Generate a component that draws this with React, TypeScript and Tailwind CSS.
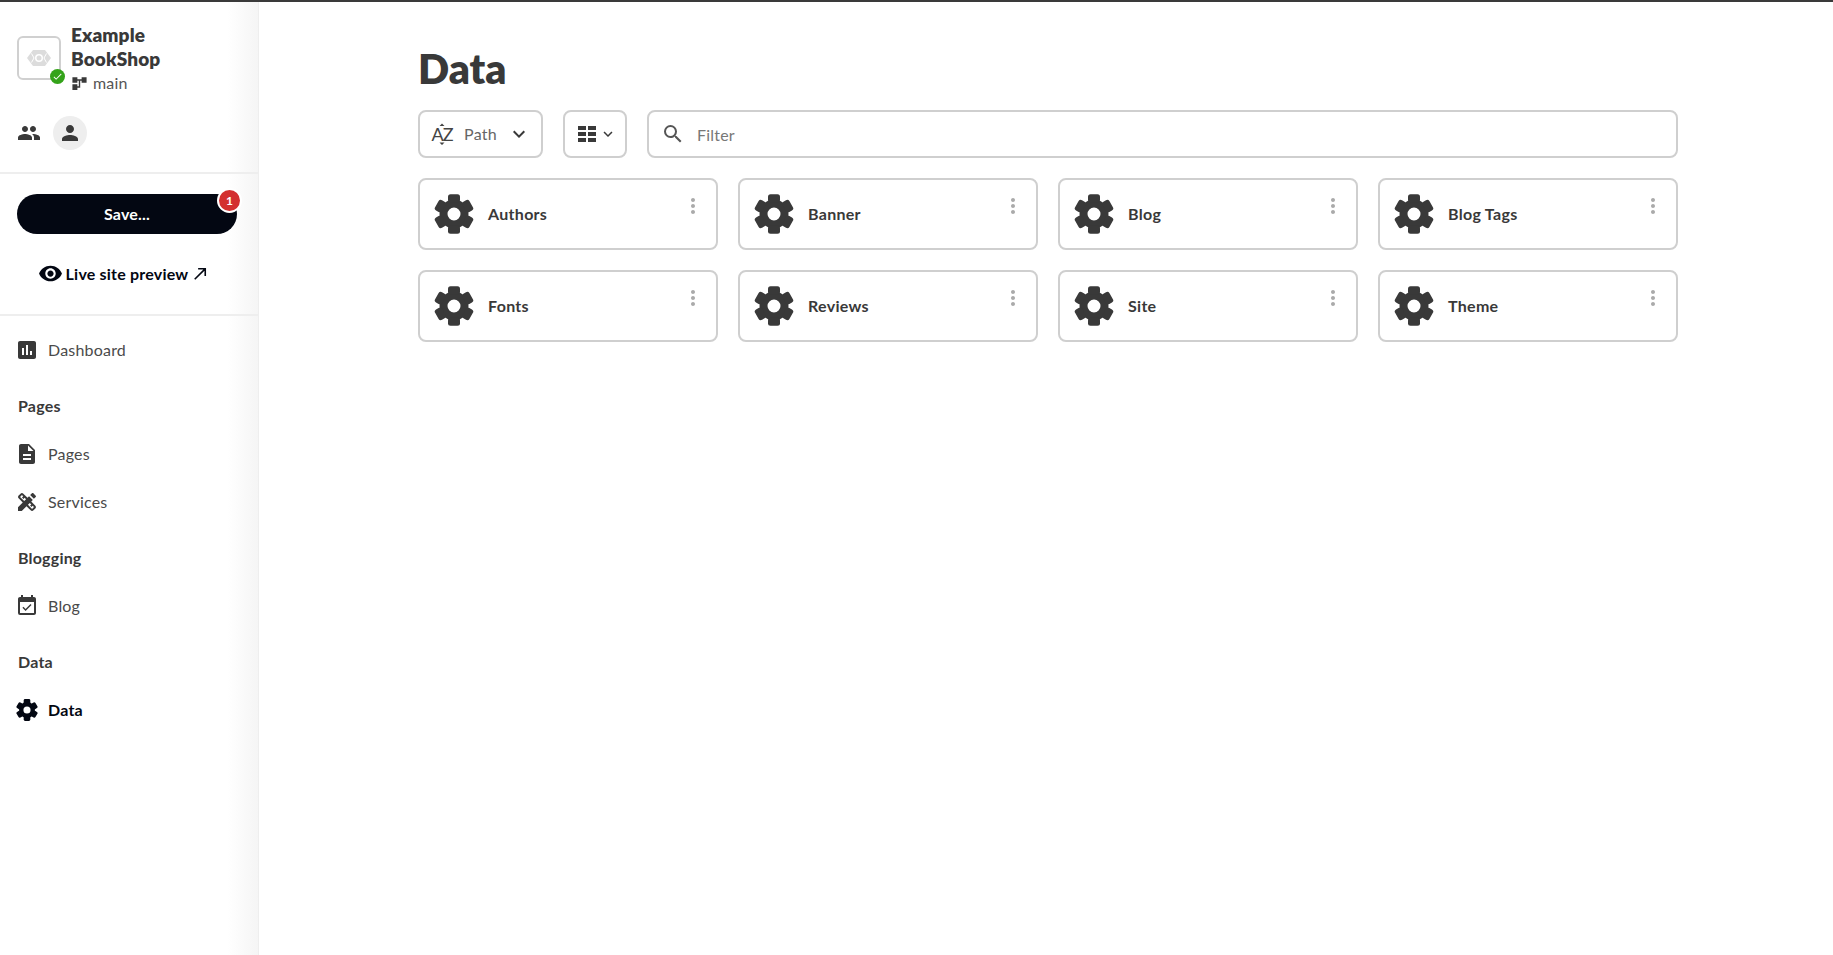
import React from "react";
import { MdPeople, MdPerson, MdAssessment, MdDescription, MdDesignServices, MdEventAvailable, MdVisibility, MdNorthEast, MdExpandMore, MdSearch, MdMoreVert, MdAccountTree, MdCheck } from "react-icons/md";

const names = ["Authors", "Banner", "Blog", "Blog Tags", "Fonts", "Reviews", "Site", "Theme"];

function Gear({ size, className }: { size: number; className?: string }) {
  return (
    <svg width={size} height={size} viewBox="0 0 40 40" className={className} fill="currentColor">
      <path
        fillRule="evenodd"
        d="M20 5.5a14.5 14.5 0 1 0 0 29a14.5 14.5 0 1 0 0-29zM20 13.5a6.5 6.5 0 1 1 0 13a6.5 6.5 0 1 1 0-13z"
      />
      {[0, 60, 120, 180, 240, 300].map((a) => (
        <rect key={a} x="14" y="0.2" width="12" height="8" rx="2.5" transform={`rotate(${a} 20 20)`} />
      ))}
    </svg>
  );
}

function NavItem({ icon, label, active, className }: { icon: React.ReactNode; label: string; active?: boolean; className?: string }) {
  return (
    <div className={`flex h-[24px] items-center gap-[9px] pl-[15px] text-[16px] tracking-[0.2px] ${active ? "font-bold text-[#030712]" : "text-[#4a4a4a]"} ${className ?? ""}`}>
      <span className="flex w-[24px] justify-center">{icon}</span>
      <span>{label}</span>
    </div>
  );
}

function SectionLabel({ children, className }: { children: React.ReactNode; className?: string }) {
  return <div className={`h-[20px] pl-[18px] text-[16px] font-bold leading-[20px] tracking-[0.2px] text-[#393939] ${className ?? ""}`}>{children}</div>;
}

export default function App() {
  return (
    <div className="flex h-[955px] w-[1833px] overflow-hidden border-t-2 border-[#3a3a3a] bg-white text-[#393939] [font-family:Lato,sans-serif]">
      <aside className="flex w-[259px] shrink-0 flex-col border-r border-[#eeeeee] bg-gradient-to-r from-white from-[88%] to-[#f5f5f5]">
        <div className="flex h-[172px] flex-col border-b-2 border-[#eeeeee] pl-[17px]">
          <div className="mt-[21px] flex gap-[10px]">
            <div className="relative mt-[13px] flex h-[44px] w-[44px] items-center justify-center rounded-[6px] border-2 border-[#d0d0d0]">
              <svg width="24" height="16" viewBox="0 0 24 16" className="text-[#dcdcdc]" fill="currentColor">
                <path d="M6 0h12l6 8-6 8H6L0 8z" />
                <circle cx="12" cy="8" r="4" fill="#ffffff" />
                <circle cx="12" cy="8" r="2.5" />
                <path d="M4.5 3.5 7 8l-2.5 4.5M19.5 3.5 17 8l2.5 4.5" fill="none" stroke="#ffffff" strokeWidth="1" />
              </svg>
              <span className="absolute bottom-[-6px] right-[-6px] flex h-[15px] w-[15px] items-center justify-center rounded-full bg-[#34a31a] text-white">
                <MdCheck size={11} />
              </span>
            </div>
            <div className="flex flex-col">
              <div className="text-[19px] font-extrabold leading-[24px] tracking-[0.1px] text-[#393939]">Example<br />BookShop</div>
              <div className="flex h-[24px] items-center gap-[5px] text-[16px] tracking-[0.2px] text-[#555]">
                <MdAccountTree size={17} className="-scale-x-100 text-[#393939]" />
                <span>main</span>
              </div>
            </div>
          </div>
          <div className="mt-[21px] flex items-center gap-[12px]">
            <MdPeople size={24} className="text-[#393939]" />
            <span className="flex h-[34px] w-[34px] items-center justify-center rounded-full bg-[#eeeeee]">
              <MdPerson size={24} className="text-[#393939]" />
            </span>
          </div>
        </div>
        <div className="flex h-[142px] flex-col border-b-2 border-[#eeeeee] px-[17px]">
          <div className="relative mt-[20px] flex h-[40px] w-[220px] items-center justify-center rounded-full bg-[#030712] text-[16px] font-bold tracking-[0.2px] text-white">
            Save...
            <span className="absolute right-[-5px] top-[-6px] flex h-[25px] w-[25px] items-center justify-center rounded-full border-2 border-white bg-[#d32f2f] text-[12px] font-bold">1</span>
          </div>
          <div className="mt-[27px] flex w-[214px] items-center justify-center gap-[3px] text-[16px] font-bold tracking-[0.2px] text-[#030712]">
            <MdVisibility size={25} />
            <span>Live site preview</span>
            <MdNorthEast size={19} />
          </div>
        </div>
        <NavItem className="mt-[22px]" icon={<MdAssessment size={24} className="text-[#393939]" />} label="Dashboard" />
        <SectionLabel className="mt-[34px]">Pages</SectionLabel>
        <NavItem className="mt-[26px]" icon={<MdDescription size={24} className="text-[#393939]" />} label="Pages" />
        <NavItem className="mt-[24px]" icon={<MdDesignServices size={24} className="text-[#393939]" />} label="Services" />
        <SectionLabel className="mt-[34px]">Blogging</SectionLabel>
        <NavItem className="mt-[26px]" icon={<MdEventAvailable size={24} className="text-[#393939]" />} label="Blog" />
        <SectionLabel className="mt-[34px]">Data</SectionLabel>
        <NavItem className="mt-[26px]" active icon={<Gear size={22} />} label="Data" />
      </aside>
      <main className="ml-[159px] w-[1260px]">
        <h1 className="mt-[44px] h-[46px] text-[41px] font-extrabold leading-[46px] text-[#393939]">Data</h1>
        <div className="mt-[18px] flex h-[48px] gap-[20px]">
          <div className="flex w-[125px] items-center rounded-[8px] border-2 border-[#cfcfcf] pl-[11px] pr-[10px] text-[16px] tracking-[0.3px] text-[#666]">
            <span className="relative flex h-[24px] w-[22px] items-center justify-center text-[18px] leading-none tracking-[-1px] text-[#444]">
              AZ
              <svg width="6" height="24" viewBox="0 0 6 24" className="absolute left-[8px] top-0" fill="currentColor">
                <path d="M3 1.5 5.5 4H.5zM3 23l-2.5-2.5h5z" />
              </svg>
            </span>
            <span className="ml-[11px]">Path</span>
            <MdExpandMore size={24} className="ml-auto text-[#393939]" />
          </div>
          <div className="flex w-[64px] items-center rounded-[8px] border-2 border-[#cfcfcf] pl-[13px] text-[#393939]">
            <svg width="18" height="16" viewBox="0 0 18 16" fill="currentColor">
              <path d="M0 0h8v4H0zM10 0h8v4h-8zM0 6h8v4H0zM10 6h8v4h-8zM0 12h8v4H0zM10 12h8v4h-8z" />
            </svg>
            <MdExpandMore size={18} className="ml-[3px]" />
          </div>
          <div className="flex flex-1 items-center rounded-[8px] border-2 border-[#cfcfcf] pl-[12px] text-[16px] tracking-[0.2px] text-[#777]">
            <MdSearch size={24} className="text-[#555]" />
            <span className="mt-[1px] ml-[12px]">Filter</span>
          </div>
        </div>
        <div className="mt-[20px] grid grid-cols-4 gap-[20px]">
          {names.map((n) => (
            <div key={n} className="relative flex h-[72px] items-center rounded-[8px] border-2 border-[#cfcfcf] pl-[14px]">
              <Gear size={40} className="text-[#393939]" />
              <span className="ml-[14px] text-[16px] font-bold tracking-[0.3px] text-[#393939]">{n}</span>
              <MdMoreVert size={24} className="absolute right-[11px] top-[14px] text-[#aaaaaa]" />
            </div>
          ))}
        </div>
      </main>
    </div>
  );
}
